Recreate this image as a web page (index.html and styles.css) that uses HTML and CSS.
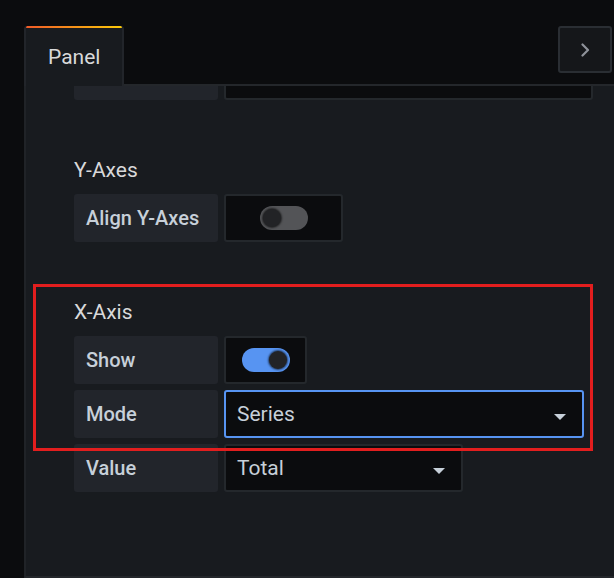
FILE: index.html
```html
<!DOCTYPE html>
<html lang="en">
<head>
<meta charset="utf-8">
<title>Panel editor</title>
<link rel="stylesheet" href="styles.css">
</head>
<body>
<div class="editor">
  <div class="tabbar">
    <div class="tab">Panel</div>
    <button class="collapse" type="button" aria-label="Collapse">
      <svg width="10" height="14" viewBox="0 0 10 14"><path d="M2.5 1.5 L8 7 L2.5 12.5" fill="none" stroke="#8e929a" stroke-width="2.2" stroke-linecap="round" stroke-linejoin="round"/></svg>
    </button>
  </div>
  <div class="pane">
    <div class="scroll">
      <div class="section partial">
        <div class="row">
          <div class="label"></div>
          <div class="input wide"></div>
        </div>
      </div>

      <div class="section">
        <h3 class="heading">Y-Axes</h3>
        <div class="row">
          <div class="label">Align Y-Axes</div>
          <div class="switch-box align"><span class="switch"><span class="knob"></span></span></div>
        </div>
      </div>

      <div class="section x-axis">
        <h3 class="heading">X-Axis</h3>
        <div class="row">
          <div class="label">Show</div>
          <div class="switch-box show"><span class="switch on"><span class="knob"></span></span></div>
        </div>
        <div class="row">
          <div class="label">Mode</div>
          <div class="input select focused mode"><span class="value">Series</span><span class="caret"></span></div>
        </div>
        <div class="row">
          <div class="label">Value</div>
          <div class="input select valuesel"><span class="value">Total</span><span class="caret"></span></div>
        </div>
        <div class="annot"></div>
      </div>
    </div>
  </div>
</div>
</body>
</html>
```
FILE: styles.css
```css
* { box-sizing: border-box; }
html, body { margin: 0; padding: 0; height: 100%; }
body {
  background: #0b0c0e;
  font-family: Roboto, "Liberation Sans", sans-serif;
  color: #d8d9da;
  overflow: hidden;
}
.editor {
  height: 100%;
  display: flex;
  flex-direction: column;
}
.tabbar {
  display: flex;
  align-items: flex-start;
  padding-top: 26px;
  padding-left: 24px;
}
.tab {
  position: relative;
  z-index: 1;
  width: 100px;
  height: 60px;
  margin-bottom: -2px;
  padding-left: 22px;
  padding-top: 2px;
  display: flex;
  align-items: center;
  font-size: 21px;
  color: #d8d9da;
  border-left: 2px solid #22252a;
  border-right: 2px solid #22252a;
  border-radius: 3px 3px 0 0;
  background: linear-gradient(90deg, #f05a28, #fbca0a) top / 100% 2px no-repeat, #181b1f;
}
.collapse {
  margin-left: auto;
  margin-right: 2px;
  width: 54px;
  height: 47px;
  padding: 0;
  display: flex;
  align-items: center;
  justify-content: center;
  background: #15171a;
  border: 2px solid #2a2e33;
  border-radius: 3px;
}
.pane {
  flex: 1;
  margin-left: 24px;
  background: #181b1f;
  border-left: 2px solid #202327;
  border-top: 2px solid #24272b;
  border-bottom: 2px solid #24272b;
  overflow: hidden;
}
.scroll {
  padding-left: 48px;
}
.section { margin-bottom: 54px; }
.section.partial { margin-top: -34px; }
.x-axis { position: relative; }
.heading {
  margin: 0 0 8px 0;
  height: 32px;
  font-size: 21px;
  line-height: 32px;
  font-weight: 400;
  color: #d8d9da;
}
.row {
  display: flex;
  gap: 6px;
  height: 48px;
  margin-bottom: 6px;
}
.row:last-of-type { margin-bottom: 0; }
.label {
  width: 144px;
  height: 48px;
  display: flex;
  align-items: center;
  padding-left: 12px;
  background: #22252b;
  border-radius: 3px;
  font-size: 20px;
  font-weight: 500;
  color: #c7d0d9;
}
.input {
  height: 48px;
  background: #0b0c0e;
  border: 2px solid #24282c;
  border-radius: 3px;
  display: flex;
  align-items: center;
  padding: 0 16px 0 11px;
  font-size: 21px;
  color: #c7d0d9;
}
.input.wide { width: 369px; }
.select .value { flex: 1; }
.mode { width: 360px; }
.valuesel { width: 239px; }
.focused {
  border-color: #5794f2;
}
.caret {
  width: 0;
  height: 0;
  margin-top: 6px;
  border-left: 6.5px solid transparent;
  border-right: 6.5px solid transparent;
  border-top: 6.5px solid #c7d0d9;
}
.switch-box {
  height: 48px;
  background: #0b0c0e;
  border: 2px solid #24282c;
  border-radius: 3px;
  display: flex;
  align-items: center;
  padding-left: 34px;
}
.switch-box.align { width: 119px; }
.switch-box.show { width: 83px; padding-left: 16px; }
.switch {
  width: 48px;
  height: 24px;
  border-radius: 12px;
  background: #535457;
  display: flex;
  align-items: center;
  padding: 0 3px;
}
.switch.on {
  background: #5794f2;
  justify-content: flex-end;
}
.knob {
  width: 18px;
  height: 18px;
  border-radius: 50%;
  background: #222326;
  box-shadow: 0 0 2px 1px rgba(0, 0, 0, 0.6);
}
.annot {
  position: absolute;
  left: -41px;
  top: -12px;
  width: 560px;
  height: 167px;
  border: 3px solid #e21e1e;
  pointer-events: none;
}
```
